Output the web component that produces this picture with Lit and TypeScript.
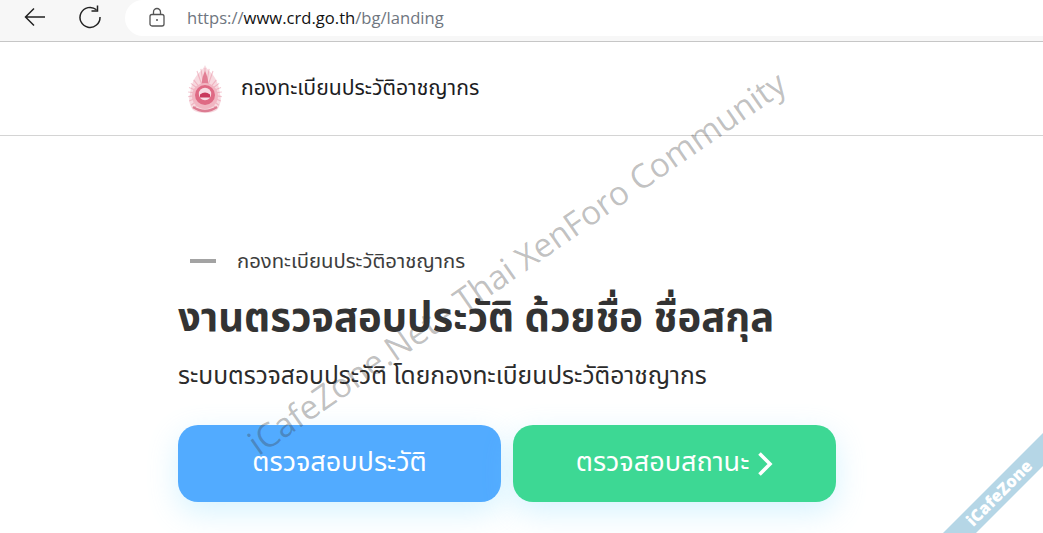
import { LitElement, html, css, svg } from "lit";
import { customElement } from "lit/decorators.js";

@customElement("app-root")
export class AppRoot extends LitElement {
  static styles = css`
    :host { display: block; position: relative; width: 1043px; height: 533px; overflow: hidden; background: #fff; font-family: "Noto Sans Thai", "Noto Sans", "DejaVu Sans", sans-serif; }
    .browser { height: 41px; background: #f7f7f7; border-bottom: 1px solid #c6c6c6; display: flex; align-items: flex-start; }
    .navbtn { width: 24px; height: 24px; flex: none; margin-top: 5px; }
    .back { margin-left: 23px; }
    .reload { margin-left: 31px; }
    .url { flex: 1; margin-left: 23px; height: 36px; background: #fff; border-radius: 18px 0 0 18px; display: flex; align-items: center; padding-left: 23px; padding-bottom: 2px; box-sizing: border-box; font-family: "Open Sans", "Noto Sans", sans-serif; font-size: 16.6px; color: #6f7680; }
    .url b { font-weight: 400; color: #111; }
    .lock { width: 18px; height: 20px; margin-right: 21px; flex: none; }
    .site { height: 93px; border-bottom: 1px solid #d4d4d4; display: flex; align-items: center; padding-left: 186px; gap: 17px; font-size: 21.2px; color: #1d1d1f; }
    .emblem { width: 38px; height: 50px; flex: none; filter: blur(.5px); }
    .hero { padding: 110px 0 0 178px; }
    .eyebrow { display: flex; align-items: center; gap: 21px; padding-left: 12px; font-size: 20.3px; color: #3d3d3d; height: 30px; }
    .dash { width: 26px; height: 4px; background: #a3a3a3; }
    h1 { margin: 13px 0 0; font-size: 40px; line-height: 60px; font-weight: 700; color: #333; }
    .sub { margin: 10px 0 0; font-size: 24.6px; line-height: 36px; color: #2b2b2b; }
    .actions { display: flex; gap: 12px; margin-top: 30px; }
    .btn { width: 323px; height: 77px; border-radius: 20px; display: flex; align-items: center; justify-content: center; gap: 8px; color: #fff; font-size: 27px; box-shadow: 0 10px 30px rgba(120,215,255,.3); padding-bottom: 2px; box-sizing: border-box; }
    .blue { background: #52abff; }
    .green { background: #3dd894; }
    .chev { width: 16px; height: 24px; margin-top: 2px; }
    .mark { position: absolute; left: 238px; top: 427px; transform-origin: 0 0; transform: rotate(-34.7deg); white-space: nowrap; font-family: "Open Sans", sans-serif; font-size: 33.5px; color: rgba(60,60,60,.33); pointer-events: none; }
    .ribbon { position: absolute; left: 923px; top: 423px; display: block; pointer-events: none; }
    .ribtext { position: absolute; left: 969px; top: 515px; transform-origin: 0 50%; transform: rotate(-45deg); font-family: "Open Sans", sans-serif; font-weight: 800; font-size: 16.5px; line-height: 16px; color: #fff; white-space: nowrap; }
  `;

  private emblem() {
    const rays = [] as unknown[];
    for (let a = -140; a <= 140; a += 14) {
      const r = (a * Math.PI) / 180;
      const x = 19 + Math.sin(r) * 17;
      const y = 30 - Math.cos(r) * (Math.abs(a) < 40 ? 26 : 19);
      rays.push(svg`<path d="M19 30L${x.toFixed(1)} ${y.toFixed(1)}" stroke="#e88ea2" stroke-width="1.1" opacity=".5"/>`);
    }
    return svg`<svg class="emblem" viewBox="0 0 38 50">
      <path d="M19 1 C21 6 24 7 27 11 C31 16 33 22 34 30 C36 36 34 42 31 46 C26 50 12 50 7 46 C4 42 2 36 4 30 C5 22 7 16 11 11 C14 7 17 6 19 1Z" fill="#f7d9df"/>
      ${rays}
      <path d="M19 7 C21 11 22 15 22.5 21 L15.5 21 C16 15 17 11 19 7Z" fill="#e27f95"/>
      <circle cx="19" cy="32" r="13" fill="#f1b6c2"/>
      <circle cx="19" cy="31" r="10" fill="#df6a84"/>
      <circle cx="19" cy="30" r="6.2" fill="#f8dde3"/>
      <path d="M14 30.5 Q19 26.5 24 30.5 L24 33.5 L14 33.5Z" fill="#c93a5c"/>
      <path d="M7 43 Q19 51 31 43" fill="none" stroke="#dc7c92" stroke-width="2.4"/>
    </svg>`;
  }

  render() {
    return html`
      <div class="browser">
        <svg class="navbtn back" viewBox="0 0 24 24" fill="none" stroke="#222" stroke-width="1.5"><path d="M22 12H2.5M11 3.5l-8.5 8.5 8.5 8.5"/></svg>
        <svg class="navbtn reload" viewBox="0 0 24 24" fill="none" stroke="#222" stroke-width="1.5"><path d="M18.5 4.8A10 10 0 1 0 22 12"/><path d="M19.5 0.5v5.5h-6"/></svg>
        <div class="url">
          <svg class="lock" viewBox="0 0 18 20" fill="none" stroke="#555" stroke-width="1.3"><rect x="2" y="7.5" width="14" height="11.5" rx="2"/><path d="M5.5 7.5V5a3.5 3.5 0 0 1 7 0v2.5"/><circle cx="9" cy="13" r="1" fill="#555" stroke="none"/></svg>
          <span>https://<b>www.crd.go.th</b>/bg/landing</span>
        </div>
      </div>
      <div class="site">${this.emblem()}<span>กองทะเบียนประวัติอาชญากร</span></div>
      <div class="hero">
        <div class="eyebrow"><span class="dash"></span><span>กองทะเบียนประวัติอาชญากร</span></div>
        <h1>งานตรวจสอบประวัติ ด้วยชื่อ ชื่อสกุล</h1>
        <p class="sub">ระบบตรวจสอบประวัติ โดยกองทะเบียนประวัติอาชญากร</p>
        <div class="actions">
          <div class="btn blue">ตรวจสอบประวัติ</div>
          <div class="btn green">ตรวจสอบสถานะ
            <svg class="chev" viewBox="0 0 16 24" fill="none" stroke="#fff" stroke-width="3.6"><path d="M2.5 1.5L13 12 2.5 22.5"/></svg>
          </div>
        </div>
      </div>
      <div class="mark">iCafeZone.Net - Thai XenForo Community</div>
      <svg class="ribbon" width="120" height="110" viewBox="0 0 120 110"><polygon points="20,110 120,10 120,43 53,110" fill="#b5d6e6"/></svg>
      <div class="ribtext">iCafeZone</div>
    `;
  }
}
